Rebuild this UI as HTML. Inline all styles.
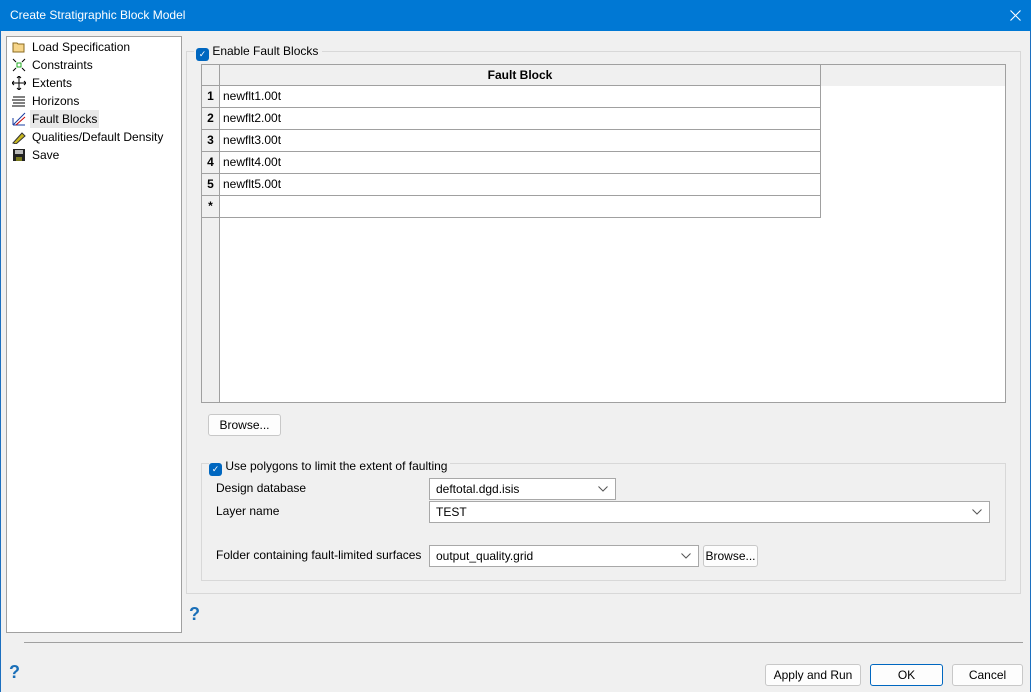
<!DOCTYPE html><html><head><style>
*{box-sizing:border-box}body{margin:0;width:1031px;height:692px;background:#f0f0f0;font-family:"Liberation Sans",sans-serif;font-size:12px;color:#000;position:relative;overflow:hidden}
.a{position:absolute}
.tb{left:0;top:0;width:1031px;height:31px;background:#0078d4;color:#fff;font-size:12px;line-height:31px;padding-left:10px}
.lp{left:6px;top:36px;width:176px;height:597px;background:#fff;border:1px solid #a0a0a0}
.it{position:absolute;left:4px;height:18px;line-height:18px}
.it span{position:absolute;left:21px;white-space:nowrap}
.ic{position:absolute;left:1px;top:2px;width:14px;height:14px}
.cb{width:13px;height:13px;background:#0067c0;border-radius:3px;color:#fff;font-size:9px;line-height:13px;text-align:center}
.cell{position:absolute;border-right:1px solid #a0a0a0;border-bottom:1px solid #a0a0a0;height:22px;line-height:21px}
.btn{position:absolute;background:#fdfdfd;border:1px solid #c8c8c8;border-radius:3px;text-align:center;line-height:20px;height:22px}
.inp{position:absolute;background:#fff;border:1px solid #a8a8a8;height:22px;line-height:20px;padding-left:6px}
.chev{position:absolute;right:7px;top:7px}
</style></head><body>
<div class="a tb">Create Stratigraphic Block Model</div>
<svg class="a" style="left:1010px;top:10px" width="11" height="11" viewBox="0 0 11 11"><path d="M0.5 0.5l10 10M10.5 0.5l-10 10" stroke="#fff" stroke-width="1.1"/></svg>
<div class="a" style="left:0;top:31px;width:1px;height:661px;background:#1c6fbf"></div>
<div class="a" style="right:0;top:31px;width:1px;height:661px;background:#1c6fbf"></div>
<div class="a lp">
<div class="it" style="top:1px"><svg class="ic" viewBox="0 0 14 14"><path d="M1 3h4l1 1h6v8H1z" fill="#f6d58a" stroke="#8a6a20"/></svg><span>Load Specification</span></div>
<div class="it" style="top:19px"><svg class="ic" viewBox="0 0 14 14"><rect x="5" y="5" width="4" height="4" fill="none" stroke="#2a2"/><path d="M1 1l3 3M13 1l-3 3M1 13l3-3M13 13l-3-3" stroke="#000"/></svg><span>Constraints</span></div>
<div class="it" style="top:37px"><svg class="ic" viewBox="0 0 14 14"><path d="M7 0v14M0 7h14M5 2l2-2 2 2M5 12l2 2 2-2M2 5L0 7l2 2M12 5l2 2-2 2" stroke="#000" fill="none"/></svg><span>Extents</span></div>
<div class="it" style="top:55px"><svg class="ic" viewBox="0 0 14 14"><path d="M1 3h12M0 6h13M1 9h12M0 12h13" stroke="#000"/></svg><span>Horizons</span></div>
<div class="it" style="top:73px"><svg class="ic" viewBox="0 0 14 14"><path d="M1 13L13 1M1 13h12M1 13V6" stroke="#1a3ca0" fill="none"/><path d="M4 13L13 5" stroke="#c00"/></svg><span style="background:#e8e8e8;padding:0 2px;left:19px">Fault Blocks</span></div>
<div class="it" style="top:91px"><svg class="ic" viewBox="0 0 14 14"><path d="M1 13L10 3l3 3-9 8z" fill="#c8b820" stroke="#333"/></svg><span>Qualities/Default Density</span></div>
<div class="it" style="top:109px"><svg class="ic" viewBox="0 0 14 14"><rect x="1" y="1" width="12" height="12" fill="#222"/><rect x="3" y="2" width="8" height="4" fill="#bbb"/><rect x="4" y="9" width="6" height="4" fill="#7a7a20"/></svg><span>Save</span></div>
</div>
<div class="a" style="left:186px;top:51px;width:835px;height:543px;border:1px solid #d8d8d8"></div>
<div class="a" style="left:194px;top:44px;background:#f0f0f0;padding:0 4px 0 2px;height:15px;line-height:15px"><div class="cb" style="display:inline-block;vertical-align:-2px">✓</div> Enable Fault Blocks</div>
<div class="a" style="left:201px;top:64px;width:805px;height:339px;border:1px solid #a0a0a0;background:#fff">
<div class="a" style="left:0;top:0;width:803px;height:21px;background:#f0f0f0"></div>
<div class="a" style="left:0;top:0;width:18px;height:337px;background:#f0f0f0;border-right:1px solid #a0a0a0"></div>
<div class="cell" style="left:0;top:0;width:18px;height:21px"></div>
<div class="cell" style="left:18px;top:0;width:601px;height:21px;text-align:center;font-weight:bold;line-height:20px">Fault Block</div>
<div class="cell" style="left:0;top:21px;width:18px;text-align:center;font-weight:bold">1</div><div class="cell" style="left:18px;top:21px;width:601px;padding-left:3px">newflt1.00t</div>
<div class="cell" style="left:0;top:43px;width:18px;text-align:center;font-weight:bold">2</div><div class="cell" style="left:18px;top:43px;width:601px;padding-left:3px">newflt2.00t</div>
<div class="cell" style="left:0;top:65px;width:18px;text-align:center;font-weight:bold">3</div><div class="cell" style="left:18px;top:65px;width:601px;padding-left:3px">newflt3.00t</div>
<div class="cell" style="left:0;top:87px;width:18px;text-align:center;font-weight:bold">4</div><div class="cell" style="left:18px;top:87px;width:601px;padding-left:3px">newflt4.00t</div>
<div class="cell" style="left:0;top:109px;width:18px;text-align:center;font-weight:bold">5</div><div class="cell" style="left:18px;top:109px;width:601px;padding-left:3px">newflt5.00t</div>
<div class="cell" style="left:0;top:131px;width:18px;text-align:center;font-weight:bold">*</div><div class="cell" style="left:18px;top:131px;width:601px"></div>
</div>
<div class="btn" style="left:208px;top:414px;width:73px">Browse...</div>
<div class="a" style="left:201px;top:463px;width:805px;height:118px;border:1px solid #d8d8d8"></div>
<div class="a" style="left:209px;top:459px;background:#f0f0f0;padding:0 3px 0 0;height:15px;line-height:15px"><div class="cb" style="display:inline-block;vertical-align:-2px">✓</div> Use polygons to limit the extent of faulting</div>
<div class="a" style="left:216px;top:481px">Design database</div>
<div class="a" style="left:216px;top:504px">Layer name</div>
<div class="a" style="left:216px;top:548px">Folder containing fault-limited surfaces</div>
<div class="inp" style="left:429px;top:478px;width:187px">deftotal.dgd.isis<svg class="chev" width="10" height="6"><path d="M0.5 0.5l4.5 4.5 4.5-4.5" stroke="#555" fill="none"/></svg></div>
<div class="inp" style="left:429px;top:501px;width:561px">TEST<svg class="chev" width="10" height="6"><path d="M0.5 0.5l4.5 4.5 4.5-4.5" stroke="#555" fill="none"/></svg></div>
<div class="inp" style="left:429px;top:545px;width:270px">output_quality.grid<svg class="chev" width="10" height="6"><path d="M0.5 0.5l4.5 4.5 4.5-4.5" stroke="#555" fill="none"/></svg></div>
<div class="btn" style="left:703px;top:545px;width:55px">Browse...</div>
<div class="a" style="left:189px;top:604px;color:#1a6fb8;font-weight:bold;font-size:18px">?</div>
<div class="a" style="left:24px;top:642px;width:999px;height:1px;background:#a0a0a0"></div>
<div class="a" style="left:9px;top:662px;color:#1a6fb8;font-weight:bold;font-size:18px">?</div>
<div class="btn" style="left:765px;top:664px;width:96px">Apply and Run</div>
<div class="btn" style="left:870px;top:664px;width:73px;border:1px solid #0067c0">OK</div>
<div class="btn" style="left:952px;top:664px;width:71px">Cancel</div>
</body></html>
